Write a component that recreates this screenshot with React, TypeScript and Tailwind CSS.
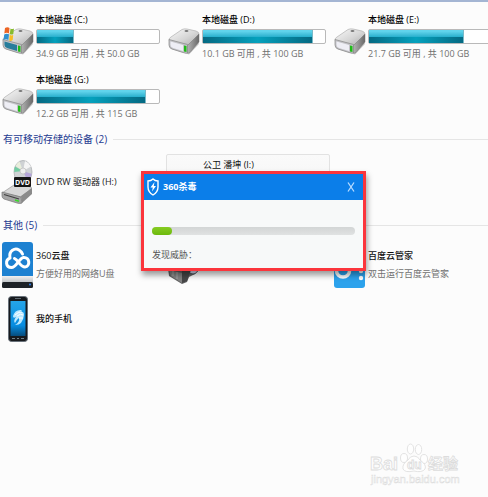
import type { ReactNode } from "react";

interface DriveProps {
    name: string
    detail: string
    used: number
    system?: boolean
}

interface ItemProps {
    icon: ReactNode
    name?: string
    detail?: string
}

function DriveIcon({ system }: { system?: boolean }) {
    return (
        <svg viewBox="0 0 32 28" className="w-8 h-7 shrink-0" aria-hidden="true">
            <defs>
                <linearGradient id="driveTop" x1="0" y1="0" x2="1" y2="1">
                    <stop offset="0" stopColor="#fafafa" />
                    <stop offset="0.55" stopColor="#d6d6d6" />
                    <stop offset="1" stopColor="#ababab" />
                </linearGradient>
                <linearGradient id="driveSide" x1="0" y1="0" x2="1" y2="0">
                    <stop offset="0" stopColor="#b5b5b5" />
                    <stop offset="1" stopColor="#686868" />
                </linearGradient>
            </defs>
            <path d="M2 20 L20 26 L30 15 L31 17 L21 27.500 L3 22 Z" fill="#999" opacity="0.5" />
            <path d="M1 13 Q1 11 3 10 L14 2.500 Q16 1.500 19 2 L28 4 Q31 5 31 7 L21 17.500 Q20 19 17 18.500 L2 14.500 Z" fill="url(#driveTop)" stroke="#b0b0b0" strokeWidth="0.7" />
            <path d="M31 7 V15 L22 25.500 Q21 26.500 19 26 L19.500 18.500 Z" fill="url(#driveSide)" stroke="#777" strokeWidth="0.5" />
            <path d="M1 12.500 L19.500 17.500 V26 Q18 26.500 15 25.500 L4 22 Q1 21 1 18 Z" fill="#c4c4c8" stroke="#858585" strokeWidth="0.7" />
            <path d="M2.500 14.500 L15 18 V24 L5 21 Q2.500 20 2.500 18 Z" fill={system ? "#277d9b" : "#eeeef5"} />
            <path d="M16 18.500 L18.500 19 V25 L16 24.500 Z" fill="#21bb19" />
            <ellipse cx="18.500" cy="4" rx="2" ry="0.900" fill="#777" />
            {system && (
                <g>
                    <path d="M3 1 Q5.500 -0.500 7.500 1 L7 6.500 Q5 5 2.300 6.500 Z" fill="#ec6424" />
                    <path d="M8.500 1.500 Q10 2.500 12 1.500 L11.300 7 Q9.500 8 7.800 7 Z" fill="#87bb2d" />
                    <path d="M2.200 7.500 Q5 6 7 7.500 L6.400 13 Q4 11.500 1.500 13 Z" fill="#3290cf" />
                    <path d="M7.700 7.800 Q9.500 9 11.200 8 L10.700 13 Q9 14.500 7.100 13.500 Z" fill="#f6bd25" />
                </g>
            )}
        </svg>
    )
}

function DvdIcon() {
    return (
        <svg viewBox="0 0 32 44" className="w-8 h-11 shrink-0" aria-hidden="true">
            <ellipse cx="22" cy="12" rx="9" ry="11.500" fill="#cfd2d4" stroke="#a5a8aa" strokeWidth="0.700" />
            <path d="M22 11 L14.500 6 Q16 3 18.500 1.500 Z" fill="#e9eedc" />
            <path d="M22 11 L14 6.500 Q13 9 13.200 12 Z" fill="#75cda3" />
            <path d="M22 11 L31 14 Q29 19 26 20 Z" fill="#b4a4d7" />
            <path d="M22 11 L24 1 Q28 2.500 30 6.500 Z" fill="#f5f5f5" />
            <circle cx="22" cy="11" r="3" fill="#eee" stroke="#bbb" strokeWidth="0.700" />
            <path d="M1 33 L13 25 H25 L31 28 L20 37 Z" fill="#d8d8d8" stroke="#999" strokeWidth="0.700" />
            <path d="M31 28 V34 L21 43 L20 36 Z" fill="#8a8a8a" />
            <path d="M1 32 L20 37 L21 43 Q19 44 16 43 L3 39 Q1 38 1 36 Z" fill="#a5a5a5" stroke="#777" strokeWidth="0.700" />
            <path d="M3 34.500 L18 39" stroke="#404040" strokeWidth="1.300" />
            <path d="M14 40 L18 41.200" stroke="#37dc29" strokeWidth="1.500" />
            <rect x="13" y="17" width="17" height="10" rx="1" fill="#151515" />
            <text x="21.500" y="25" textAnchor="middle" fill="#fff" className="text-[7px] font-bold">DVD</text>
        </svg>
    )
}

function CloudDiskIcon() {
    return (
        <svg viewBox="0 0 32 48" className="w-8 h-12 shrink-0" aria-hidden="true">
            <defs>
                <linearGradient id="diskBase" x1="0" y1="0" x2="0" y2="1">
                    <stop offset="0" stopColor="#f1f1f1" />
                    <stop offset="1" stopColor="#b9bec2" />
                </linearGradient>
            </defs>
            <path d="M1 4 Q1 1 4 1 H29 Q32 1 32 4 V37 H1 Z" fill="#1d81d1" />
            <path d="M1 35 H32 V42 H1 Z" fill="url(#diskBase)" />
            <rect x="1" y="41" width="31" height="6" rx="1.500" fill="#1d2227" />
            <circle cx="29" cy="43.500" r="1" fill="#2d7ff0" />
            <path d="M9 17 C4 19 4.500 26.500 10.500 26.500 C15.500 26.500 18 17 22.500 16.500 C29 16 29.500 25.500 24 26 C19.500 26 17.500 19.500 13.500 17.500 M9 17 C7.500 9.500 14 6.500 18 9 Q20.500 10.500 21.500 13" fill="none" stroke="#fff" strokeWidth="3" strokeLinecap="round" strokeLinejoin="round" />
        </svg>
    )
}

function PhoneIcon() {
    return (
        <svg viewBox="0 0 32 48" className="w-8 h-12 shrink-0" aria-hidden="true">
            <defs>
                <linearGradient id="phoneScreen" x1="0" y1="0" x2="0" y2="1">
                    <stop offset="0" stopColor="#25a5e9" />
                    <stop offset="0.700" stopColor="#078ce0" />
                    <stop offset="1" stopColor="#064c7c" />
                </linearGradient>
            </defs>
            <rect x="7.500" y="1.500" width="19" height="45" rx="3" fill="#171a1e" stroke="#68717a" />
            <rect x="9.500" y="6" width="15" height="35" fill="url(#phoneScreen)" />
            <path d="M14 3.500 H20" stroke="#5d6870" />
            <path d="M12 21 Q14 14 21 15 L19 17 Q23 16 23 20 Q22 30 14 30 Q19 27 18 23 Q16 24 14 28 Q12 26 15 22 Q12 24 12 21" fill="#bde9ff" />
            <path d="M14 20 Q18 16 21 17 M16 21 Q20 18 22 20 M18 23 L22 23" stroke="#fff" fill="none" />
            <path d="M11 43.500 H14 M16 43.500 H18 M20 43.500 H23" stroke="#718087" />
        </svg>
    )
}

function CameraIcon() {
    return (
        <svg viewBox="0 0 32 48" className="w-8 h-12 shrink-0" aria-hidden="true">
            <path d="M1 27 L10 24 L27 25 L28 33 L22 36 L20 41 L15 43 L2 35 Z" fill="#606061" />
            <path d="M2 29 L15 32 L15 42 L4 35 Z" fill="#828282" />
            <path d="M6 30 V35 M10 31 V38" stroke="#a8a8a8" />
            <circle cx="26" cy="28" r="5" fill="#d1d3e8" stroke="#4b4b53" />
            <path d="M15 29 L24 29 L20 40 L15 42 Z" fill="#454647" />
        </svg>
    )
}

function ManagerIcon() {
    return (
        <svg viewBox="0 0 32 48" className="w-8 h-12 shrink-0" aria-hidden="true">
            <rect x="1" y="1" width="31" height="46" rx="3" fill="#2ca2ec" />
            <ellipse cx="10" cy="30" rx="6.500" ry="6" fill="none" stroke="#fff" strokeWidth="3.500" />
            <circle cx="28" cy="30" r="2.200" fill="#fff" />
            <circle cx="28" cy="37" r="2.200" fill="#fff" />
        </svg>
    )
}

function Drive({ name, detail, used, system }: DriveProps) {
    return (
        <div className="flex gap-0.5 pl-0.5">
            <div className="pt-3.5">
                <DriveIcon system={system} />
            </div>
            <div className="min-w-0 flex-1 pr-1.5">
                <h3 className="text-[9px] leading-[14px] font-medium whitespace-nowrap text-black">{name}</h3>
                <div role="progressbar" aria-label={name} aria-valuenow={used} className="mt-0.5 h-[15px] rounded-xs border border-[#b9b9b9] bg-white">
                    <div className="h-full border-r border-[#77b9c8] bg-linear-to-b from-[#61d4ec] from-10% via-[#2bb2cf] via-50% to-[#079bb7]" style={{ width: `${used}%` }}>
                        <div className="flex h-full items-end">
                            <div className="h-1/2 w-full bg-linear-to-r from-[#056a83] via-[#05a1bd] to-[#056a83]" />
                        </div>
                    </div>
                </div>
                <p className="mt-[3px] text-[9px] leading-[14px] whitespace-nowrap text-[#707070]">{detail}</p>
            </div>
        </div>
    )
}

function Item({ icon, name, detail }: ItemProps) {
    return (
        <div className="flex h-12 items-center gap-[3px] pl-px">
            {icon}
            <div className="text-[9px] leading-[18px] whitespace-nowrap">
                {name && <h3 className="font-medium text-[#111]">{name}</h3>}
                {detail && <p className="text-[#707070]">{detail}</p>}
            </div>
        </div>
    )
}

function GroupTitle({ children }: { children: ReactNode }) {
    return (
        <div className="flex h-5 items-center gap-1.5 pl-[3px]">
            <h2 className="text-[10px] whitespace-nowrap text-[#263b91]">{children}</h2>
            <div className="h-px flex-1 bg-[#e5e5e5]" />
        </div>
    )
}

function ScanDialog() {
    return (
        <div role="dialog" aria-label="360杀毒" className="absolute top-[169px] left-[141px] w-[225px] border-[3px] border-[#fb353c] bg-[#f7f9f9] shadow-[1px_4px_6px_rgba(0,0,0,0.4)]">
            <div className="flex h-[26px] items-center gap-1 bg-[#0b7ee9] pr-2 pl-[3px] text-white">
                <svg viewBox="0 0 12 18" className="h-[18px] w-3" fill="none" stroke="currentColor" aria-hidden="true">
                    <path d="M6 1 Q8 3 11 3 V9 Q11 14 6 17 Q1 14 1 9 V3 Q4 3 6 1 Z" strokeWidth="1.400" />
                    <path d="M7.500 4 L3.500 9.500 H5.800 L5 13.500 L9 8 H6.800 Z" fill="currentColor" stroke="none" />
                </svg>
                <h2 className="text-[9px] font-bold">360杀毒</h2>
                <button type="button" aria-label="关闭" className="ml-auto text-[#b9dcff]">
                    <svg viewBox="0 0 8 10" className="h-2.5 w-2" fill="none" stroke="currentColor" strokeWidth="1.300">
                        <path d="M1 0.500 L7 9.500 M7 0.500 L1 9.500" />
                    </svg>
                </button>
            </div>
            <div className="px-2 pt-[27px] pb-1.5">
                <div role="progressbar" aria-label="扫描进度" aria-valuenow={10} className="h-2 rounded-sm bg-linear-to-b from-[#d2d5d5] to-[#e0e2e2]">
                    <div className="h-full w-1/10 rounded-sm bg-linear-to-b from-[#86cc22] to-[#6cb90b]" />
                </div>
                <p className="mt-3 text-[9px] leading-[15px] text-[#555]">发现威胁：</p>
            </div>
        </div>
    )
}

function Watermark() {
    return (
        <div className="absolute right-[26px] bottom-2.5">
            <svg viewBox="0 0 92 44" className="h-11 w-[92px] font-['Liberation_Sans','Noto_Sans_CJK_SC',sans-serif]" fill="#fefefe" stroke="#dcdcdc" strokeWidth="0.800">
                <ellipse cx="34" cy="15" rx="3.500" ry="4.500" />
                <ellipse cx="40.500" cy="6" rx="3.200" ry="5" />
                <ellipse cx="48.500" cy="6.500" rx="3.200" ry="5" />
                <ellipse cx="54" cy="16" rx="3.500" ry="4.500" />
                <path d="M44 13 Q48 13 50 17 Q57 22 55 26 Q52 30 44 28 Q35 30 33 26 Q32 21 38 17 Q40 13 44 13 Z" />
                <g className="font-bold">
                    <text x="0" y="27" className="text-[18px]">Bai</text>
                    <text x="37" y="26" className="text-[12px]">du</text>
                    <text x="58" y="26" className="text-[15px]">经验</text>
                </g>
                <text x="1" y="40" strokeWidth="0.500" className="text-[11px]">jingyan.baidu.com</text>
            </svg>
        </div>
    )
}

export default function App() {
    return (
        <main className="relative min-h-screen overflow-hidden border-t-2 border-[#a4b5d3] bg-[#fcfcfc] font-['Open_Sans','Noto_Sans_CJK_SC',sans-serif]">
            <section className="-mr-2.5 grid grid-cols-3 gap-y-3 pt-[11px]">
                <Drive name="本地磁盘 (C:)" detail="34.9 GB 可用 , 共 50.0 GB" used={30} system />
                <Drive name="本地磁盘 (D:)" detail="10.1 GB 可用 , 共 100 GB" used={90} />
                <Drive name="本地磁盘 (E:)" detail="21.7 GB 可用 , 共 100 GB" used={78} />
                <Drive name="本地磁盘 (G:)" detail="12.2 GB 可用 , 共 115 GB" used={89} />
            </section>

            <section className="pt-2">
                <GroupTitle>有可移动存储的设备 (2)</GroupTitle>
                <div className="-mr-2.5 grid grid-cols-3 pt-[5px]">
                    <div className="flex h-[55px] items-center gap-[3px] pl-px">
                        <DvdIcon />
                        <h3 className="text-[9px] whitespace-nowrap text-[#222]">DVD RW 驱动器 (H:)</h3>
                    </div>
                    <div className="mr-0.5 rounded-xs border border-[#e2e2e2] bg-linear-to-b from-[#fafafa] to-[#f3f3f3] pl-9 text-[9px] leading-5 text-[#111]">
                        公卫 潘坤 (I:)
                    </div>
                </div>
            </section>

            <section className="pt-1.5">
                <GroupTitle>其他 (5)</GroupTitle>
                <div className="-mr-2.5 grid grid-cols-3 gap-y-1.5 pt-1.5">
                    <Item icon={<CloudDiskIcon />} name="360云盘" detail="方便好用的网络U盘" />
                    <Item icon={<CameraIcon />} />
                    <Item icon={<ManagerIcon />} name="百度云管家" detail="双击运行百度云管家" />
                    <Item icon={<PhoneIcon />} name="我的手机" />
                </div>
            </section>

            <ScanDialog />
            <Watermark />
        </main>
    )
}
